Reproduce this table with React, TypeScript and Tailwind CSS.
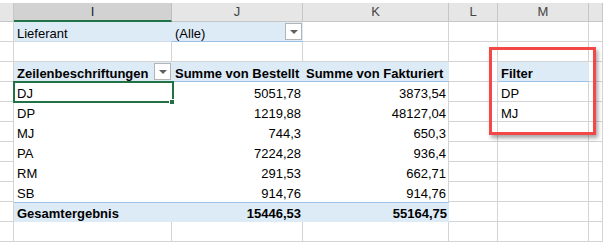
import type { ReactNode } from 'react';

// column widths: row-number stub, I, J, K, L, M, N
const W = ['w-[14px]', 'w-[158px]', 'w-[131px]', 'w-[146px]', 'w-[49px]', 'w-[91px]', 'w-[14px]'];
const LETTERS = ['', 'I', 'J', 'K', 'L', 'M', ''];

type Kind = 'grid' | 'plain' | 'plainR' | 'blue' | 'blueB' | 'blueT' | 'blueBR';

type CellSpec = {
  kind?: Kind;
  text?: ReactNode;
  right?: boolean;
  bold?: boolean;
  drop?: boolean;
};

const kindClass: Record<Kind, string> = {
  grid: 'bg-white border-r border-b border-[#d4d4d4]',
  plain: 'bg-white',
  plainR: 'bg-white border-r border-[#d4d4d4]',
  blue: 'bg-[#ddebf7] border-b border-[#cfdbe8]',
  blueB: 'bg-[#ddebf7] border-b border-[#9bc2e6]',
  blueBR: 'bg-[#ddebf7] border-b border-[#9bc2e6]',
  blueT: 'bg-[#ddebf7] border-t border-[#9bc2e6]'
};

const DropButton = () => (
  <div className="absolute right-[1px] top-[1px] w-[17px] h-[17px] border border-[#b4b4b4] bg-white flex items-center justify-center">
    <div className="w-0 h-0 border-l-[4px] border-r-[4px] border-t-[4px] border-l-transparent border-r-transparent border-t-[#606060]" />
  </div>
);

const Row = ({ cells }: { cells: CellSpec[] }) => (
  <div className="flex h-5">
    {cells.map((c, i) => (
      <div
        key={i}
        className={`${W[i]} ${i === 6 ? 'grow' : 'shrink-0'} h-5 relative overflow-hidden whitespace-nowrap px-[3px] leading-[16px] ${
          c.kind === 'blueT' ? 'pt-[3px]' : 'pt-[4px]'
        } ${kindClass[c.kind ?? 'grid']} ${c.right ? 'text-right pr-[2px]' : ''} ${c.bold ? 'font-bold' : ''}`}
      >
        {c.text}
        {c.drop && <DropButton />}
      </div>
    ))}
  </div>
);

const blankRow: CellSpec[] = Array.from({ length: 7 }, () => ({}));

const data: [string, string, string, string?][] = [
  ['DJ', '5051,78', '3873,54', 'DP'],
  ['DP', '1219,88', '48127,04', 'MJ'],
  ['MJ', '744,3', '650,3'],
  ['PA', '7224,28', '936,4'],
  ['RM', '291,53', '662,71'],
  ['SB', '914,76', '914,76']
];

export default function App() {
  return (
    <div
      className="relative w-[603px] h-[243px] overflow-hidden bg-white text-[13px] text-black"
      style={{ fontFamily: '"Liberation Sans", Arial, sans-serif' }}
    >
      <div className="h-[3px]" />
      {/* column letters */}
      <div className="flex h-[19px]">
        {LETTERS.map((l, i) => (
          <div
            key={i}
            className={`${W[i]} ${i === 6 ? 'grow' : 'shrink-0'} h-[19px] flex items-center justify-center ${
              i === 1
                ? 'bg-[#d2d2d2] border-r border-[#bdbdbd] border-b-2 border-b-[#217346] text-[#1f1f1f]'
                : 'bg-[#e6e6e6] border-r border-b border-[#c6c6c6] text-[#444]'
            }`}
          >
            {l}
          </div>
        ))}
      </div>

      <Row
        cells={[
          {},
          { kind: 'blue', text: 'Lieferant' },
          { kind: 'blueB', text: '(Alle)', drop: true },
          {},
          {},
          {},
          {}
        ]}
      />
      <Row cells={blankRow} />
      <Row
        cells={[
          {},
          { kind: 'blueB', text: 'Zeilenbeschriftungen', bold: true, drop: true },
          { kind: 'blueB', text: 'Summe von Bestellt', bold: true },
          { kind: 'blueB', text: 'Summe von Fakturiert', bold: true },
          {},
          { kind: 'blueBR', text: 'Filter', bold: true },
          {}
        ]}
      />
      {data.map(([name, ordered, billed, filter]) => (
        <Row
          key={name}
          cells={[
            {},
            { kind: 'plain', text: name },
            { kind: 'plain', text: ordered, right: true },
            { kind: 'plainR', text: billed, right: true },
            {},
            { text: filter },
            {}
          ]}
        />
      ))}
      <Row
        cells={[
          {},
          { kind: 'blueT', text: 'Gesamtergebnis', bold: true },
          { kind: 'blueT', text: '15446,53', bold: true, right: true },
          { kind: 'blueT', text: '55164,75', bold: true, right: true },
          {},
          {},
          {}
        ]}
      />
      <Row cells={blankRow} />

      {/* active cell I4 */}
      <div className="absolute left-[13px] top-[81px] w-[161px] h-[22px] border-2 border-[#217346]" />
      <div className="absolute left-[169px] top-[99px] w-[6px] h-[6px] bg-[#217346] border border-white" />

      {/* red marker around the filter list */}
      <div className="absolute left-[489px] top-[47px] w-[107px] h-[88px] border-[3px] border-[#f44848] shadow-[2px_3px_4px_rgba(0,0,0,0.35)]" />
    </div>
  );
}
